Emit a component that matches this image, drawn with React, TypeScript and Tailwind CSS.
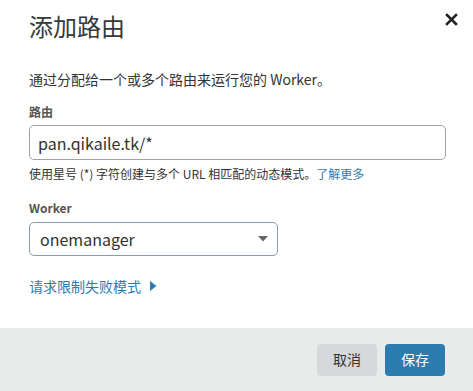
export default function App() {
  return (
    <div
      className="flex h-[391px] w-[473px] flex-col bg-white text-[#333]"
      style={{ fontFamily: '"Noto Sans CJK SC", "Noto Sans", sans-serif' }}
    >
      <div className="relative px-[29px] pt-[9px]">
        <h2 className="text-[24px] leading-[34px] font-normal text-[#36393a]">添加路由</h2>
        <button className="absolute right-[15px] top-[13px] p-0 text-[#222]" aria-label="关闭">
          <svg width="13" height="13" viewBox="0 0 13 13">
            <path d="M2 2L11 11M11 2L2 11" stroke="currentColor" strokeWidth="2.6" strokeLinecap="square" />
          </svg>
        </button>
      </div>

      <div className="flex-1 px-[29px]">
        <p className="mt-[26px] text-[14px] leading-[20px] text-[#333]">
          通过分配给一个或多个路由来运行您的 Worker。
        </p>

        <label className="mt-[15px] block text-[12px] leading-[16px] font-bold text-[#555]">路由</label>
        <div className="mt-[5px] flex h-[35px] w-[417px] items-center rounded-[5px] border border-[#9aa3aa] px-[8px] text-[16px] text-[#333]">
          pan.qikaile.tk/*
        </div>
        <p className="mt-[6px] text-[12px] leading-[16px] text-[#333]">
          使用星号 (*) 字符创建与多个 URL 相匹配的动态模式。
          <a className="text-[#2c7cb0]">了解更多</a>
        </p>

        <label className="mt-[18px] block text-[12px] leading-[16px] font-bold text-[#555]">Worker</label>
        <div className="mt-[6px] flex h-[34px] w-[249px] items-center justify-between rounded-[5px] border border-[#8d9ba5] pl-[10px] pr-[9px] text-[16px] text-[#333]">
          <span>onemanager</span>
          <svg width="10" height="6" viewBox="0 0 10 6">
            <path d="M0 0H10L5 5.5Z" fill="#666" />
          </svg>
        </div>

        <div className="mt-[20px] flex items-center gap-[9px] text-[14px] leading-[20px] text-[#2c7cb0]">
          <span>请求限制失败模式</span>
          <svg width="7" height="10" viewBox="0 0 7 10">
            <path d="M0 0L6.5 5L0 10Z" fill="#2c7cb0" />
          </svg>
        </div>
      </div>

      <div className="flex h-[63px] items-center justify-end gap-[8px] bg-[#e9eaea] pr-[28px]">
        <button className="h-[32px] w-[60px] rounded-[4px] bg-[#d6d8d9] text-[14px] text-[#333]">取消</button>
        <button className="h-[32px] w-[60px] rounded-[4px] bg-[#2c7cb0] text-[14px] text-white">保存</button>
      </div>
    </div>
  );
}
